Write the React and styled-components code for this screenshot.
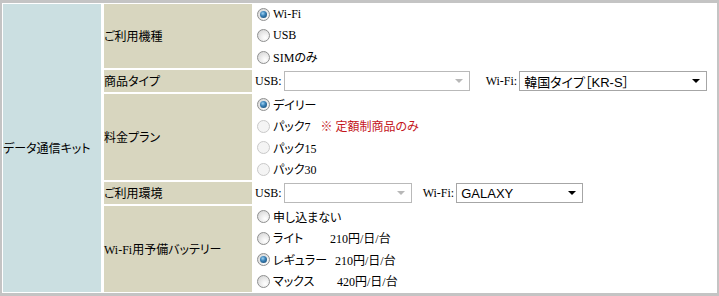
import React from "react";
import styled, { createGlobalStyle } from "styled-components";

const GlobalStyle = createGlobalStyle`
  body {
    margin: 0;
    background: #ffffff;
    font-family: "Liberation Serif", "Noto Sans CJK JP", serif;
    font-size: 12px;
    color: #000;
  }
`;

const Frame = styled.div`
  width: 719px;
  height: 296px;
  box-sizing: border-box;
  border-style: solid;
  border-color: #c4c4c4;
  border-width: 3px 2px 3px 2px;
  padding: 1px;
  background: #ffffff;
`;

const Grid = styled.div`
  display: grid;
  grid-template-columns: 98px 148px 1fr;
  grid-template-rows: 64px 22px 86px 22px 86px;
  column-gap: 3px;
  row-gap: 2px;
  font-feature-settings: "palt";
`;

const CategoryCell = styled.div`
  grid-row: 1 / -1;
  background: #cbdfe1;
  display: flex;
  align-items: center;
`;

const LabelCell = styled.div`
  background: #d8d6bf;
  display: flex;
  align-items: center;
`;

const ValueCell = styled.div`
  display: flex;
  flex-direction: ${(p) => (p.$row ? "row" : "column")};
  align-items: ${(p) => (p.$row ? "center" : "stretch")};
  padding-left: ${(p) => (p.$row ? "0" : "2px")};
`;

const Option = styled.div`
  flex: 1;
  display: flex;
  align-items: center;
  white-space: nowrap;
`;

const Radio = styled.span`
  position: relative;
  width: 13px;
  height: 13px;
  box-sizing: border-box;
  border-radius: 50%;
  margin-right: 3px;
  flex-shrink: 0;
  border: 1px solid ${(p) => (p.$disabled ? "#c9c9c9" : "#8e8f8f")};
  background: ${(p) =>
    p.$disabled
      ? "#f4f4f4"
      : "radial-gradient(circle at 65% 70%, #ffffff 0%, #f0f0f0 35%, #cfcfcf 100%)"};

  &::after {
    content: "";
    display: ${(p) => (p.$checked ? "block" : "none")};
    position: absolute;
    left: 2px;
    top: 2px;
    width: 7px;
    height: 7px;
    border-radius: 50%;
    background: radial-gradient(circle at 40% 35%, #9fd2f2 0%, #3a82b8 40%, #143f63 100%);
  }
`;

const PlanName = styled.span`
  display: inline-block;
  width: ${(p) => p.$width}px;
`;

const Note = styled.span`
  margin-left: ${(p) => p.$gap}px;
  color: #c4161c;
`;

const FieldLabel = styled.span`
  margin-left: ${(p) => p.$gap || 0}px;
  margin-right: 2px;
`;

const Select = styled.div`
  position: relative;
  width: ${(p) => p.$width}px;
  height: 20px;
  box-sizing: border-box;
  border: 1px solid ${(p) => (p.$disabled ? "#b9b9b9" : "#a6a6a6")};
  background: #ffffff;
  display: flex;
  align-items: center;
  padding-left: 4px;
  font-family: "Liberation Sans", "Noto Sans CJK JP", sans-serif;
  font-size: 13px;
  white-space: nowrap;

  &::after {
    content: "";
    position: absolute;
    right: 6px;
    top: 7px;
    border-left: 4px solid transparent;
    border-right: 4px solid transparent;
    border-top: 4px solid ${(p) => (p.$disabled ? "#b8b8b8" : "#000000")};
  }
`;

const RadioOption = ({ checked, disabled, children }) => (
  <Option>
    <Radio $checked={checked} $disabled={disabled} />
    {children}
  </Option>
);

export default function App() {
  return (
    <>
      <GlobalStyle />
      <Frame>
        <Grid>
          <CategoryCell>データ通信キット</CategoryCell>

          <LabelCell>ご利用機種</LabelCell>
          <ValueCell>
            <RadioOption checked>Wi-Fi</RadioOption>
            <RadioOption>USB</RadioOption>
            <RadioOption>SIMのみ</RadioOption>
          </ValueCell>

          <LabelCell>商品タイプ</LabelCell>
          <ValueCell $row>
            <FieldLabel>USB:</FieldLabel>
            <Select $width={186} $disabled />
            <FieldLabel $gap={16}>Wi-Fi:</FieldLabel>
            <Select $width={188}>韓国タイプ［KR-S］</Select>
          </ValueCell>

          <LabelCell>料金プラン</LabelCell>
          <ValueCell>
            <RadioOption checked>デイリー</RadioOption>
            <RadioOption disabled>
              パック7<Note $gap={10}>※ 定額制商品のみ</Note>
            </RadioOption>
            <RadioOption disabled>パック15</RadioOption>
            <RadioOption disabled>パック30</RadioOption>
          </ValueCell>

          <LabelCell>ご利用環境</LabelCell>
          <ValueCell $row>
            <FieldLabel>USB:</FieldLabel>
            <Select $width={128} $disabled />
            <FieldLabel $gap={11}>Wi-Fi:</FieldLabel>
            <Select $width={127}>GALAXY</Select>
          </ValueCell>

          <LabelCell>Wi-Fi用予備バッテリー</LabelCell>
          <ValueCell>
            <RadioOption>申し込まない</RadioOption>
            <RadioOption>
              <PlanName $width={57}>ライト</PlanName>210円/日/台
            </RadioOption>
            <RadioOption checked>
              <PlanName $width={62}>レギュラー</PlanName>210円/日/台
            </RadioOption>
            <RadioOption>
              <PlanName $width={64}>マックス</PlanName>420円/日/台
            </RadioOption>
          </ValueCell>
        </Grid>
      </Frame>
    </>
  );
}
